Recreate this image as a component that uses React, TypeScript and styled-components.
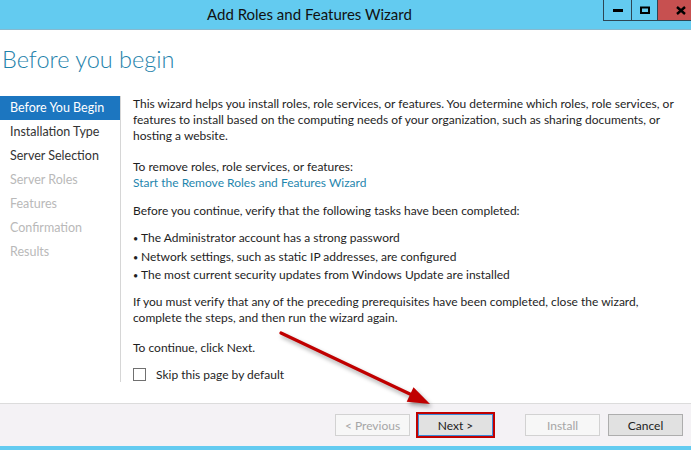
import React from 'react';
import styled, { createGlobalStyle } from 'styled-components';

const GlobalStyle = createGlobalStyle`
  html, body {
    margin: 0;
    padding: 0;
    background: #ffffff;
  }
  body {
    width: 691px;
    height: 450px;
    overflow: hidden;
    font-family: Lato, "Open Sans", sans-serif;
  }
`;

// ウィンドウ全体
const Window = styled.div`
  position: relative;
  width: 691px;
  height: 450px;
  display: flex;
  flex-direction: column;
  background: #ffffff;
`;

const TitleBar = styled.div`
  flex: none;
  height: 29px;
  background: #63cbf0;
  border-bottom: 1px solid #86b9cf;
  display: flex;
  align-items: flex-start;
`;

const TitleText = styled.div`
  flex: 1;
  padding-left: 207px;
  line-height: 29px;
  font-size: 15px;
  color: #111111;
`;

const Controls = styled.div`
  display: flex;
  height: 20px;
  border-left: 1px solid #2d4654;
  border-bottom: 1px solid #2d4654;
`;

const CtrlButton = styled.div<{ $width: number; $close?: boolean }>`
  width: ${({ $width }) => $width}px;
  height: 20px;
  display: flex;
  align-items: center;
  justify-content: center;
  background: ${({ $close }) => ($close ? '#c75050' : 'transparent')};
  & + & {
    border-left: 1px solid #2d4654;
  }
`;

const Header = styled.div`
  flex: none;
  height: 66px;
  box-sizing: border-box;
  padding: 14px 0 0 2px;
`;

const Heading = styled.h1`
  margin: 0;
  font-size: 23.5px;
  font-weight: 300;
  line-height: 30px;
  color: #1e82ab;
`;

const Body = styled.div`
  flex: 1;
  display: flex;
  align-items: flex-start;
`;

const Nav = styled.div`
  flex: none;
  width: 120px;
  height: 286px;
  border-right: 1px solid #d6d6d6;
  display: flex;
  flex-direction: column;
`;

const NavItem = styled.div<{ $state: 'active' | 'done' | 'pending' }>`
  height: 24px;
  line-height: 24px;
  padding-left: 10px;
  font-size: 12.5px;
  white-space: nowrap;
  background: ${({ $state }) => ($state === 'active' ? '#1c76c0' : 'transparent')};
  color: ${({ $state }) =>
    $state === 'active' ? '#ffffff' : $state === 'done' ? '#333333' : '#b9b9b9'};
`;

const Content = styled.div`
  flex: 1;
  padding-left: 12px;
  font-size: 12px;
  line-height: 16px;
  color: #1e1e1e;
`;

const Para = styled.p<{ $gap: number; $lh?: number }>`
  margin: ${({ $gap }) => $gap}px 0 0 0;
  line-height: ${({ $lh }) => $lh ?? 16}px;
  white-space: nowrap;
`;

const Link = styled.span`
  color: #1f86ae;
  cursor: pointer;
`;

const List = styled.ul<{ $gap: number }>`
  margin: ${({ $gap }) => $gap}px 0 0 0;
  padding: 0;
  list-style: none;
`;

const ListItem = styled.li`
  line-height: 17.5px;
  white-space: nowrap;
  &::before {
    content: '•';
    display: inline-block;
    width: 8px;
    font-size: 9px;
  }
`;

const CheckRow = styled.label`
  margin-top: 11px;
  display: flex;
  align-items: center;
  gap: 10px;
  height: 16px;
`;

const CheckBox = styled.span`
  width: 11px;
  height: 11px;
  border: 1px solid #707070;
  background: #ffffff;
`;

const Footer = styled.div`
  flex: none;
  height: 43px;
  box-sizing: border-box;
  border-top: 1px solid #dcdcdc;
  background: #f4f2f5;
  display: flex;
  justify-content: flex-end;
  align-items: flex-start;
  padding: 10px 8px 0 0;
`;

const Button = styled.button<{ $disabled?: boolean; $focused?: boolean; $gapLeft: number }>`
  width: 75px;
  height: 22px;
  margin-left: ${({ $gapLeft }) => $gapLeft}px;
  padding: 0;
  font-family: Lato, "Open Sans", sans-serif;
  font-size: 12px;
  border: 1px solid
    ${({ $disabled, $focused }) => ($disabled ? '#d2d2d2' : $focused ? '#3c8ad8' : '#adadad')};
  background: ${({ $disabled }) => ($disabled ? '#f7f7f7' : '#e1e1e1')};
  color: ${({ $disabled }) => ($disabled ? '#a6a6a6' : '#222222')};
  outline: ${({ $focused }) => ($focused ? '2px solid #c00000' : 'none')};
  outline-offset: 0;
`;

const BottomStrip = styled.div`
  flex: none;
  height: 4px;
  background: #63cbf0;
`;

// 注釈の赤い矢印（画面の上に重ねる）
const ArrowLayer = styled.svg`
  position: absolute;
  left: 0;
  top: 0;
  pointer-events: none;
  filter: drop-shadow(2px 3px 2px rgba(0, 0, 0, 0.35));
`;

const steps: { label: string; state: 'active' | 'done' | 'pending' }[] = [
  { label: 'Before You Begin', state: 'active' },
  { label: 'Installation Type', state: 'done' },
  { label: 'Server Selection', state: 'done' },
  { label: 'Server Roles', state: 'pending' },
  { label: 'Features', state: 'pending' },
  { label: 'Confirmation', state: 'pending' },
  { label: 'Results', state: 'pending' },
];

const App: React.FC = () => {
  return (
    <>
      <GlobalStyle />
      <Window>
        <TitleBar>
          <TitleText>Add Roles and Features Wizard</TitleText>
          <Controls>
            <CtrlButton $width={27}>
              <svg width="10" height="3" viewBox="0 0 10 3">
                <rect x="0" y="0" width="10" height="3" fill="#000" />
              </svg>
            </CtrlButton>
            <CtrlButton $width={25}>
              <svg width="10" height="8" viewBox="0 0 10 8">
                <rect x="1" y="1.5" width="8" height="5.5" fill="none" stroke="#000" strokeWidth="2" />
              </svg>
            </CtrlButton>
            <CtrlButton $width={33} $close>
              <svg width="10" height="9" viewBox="0 0 10 9" style={{ marginLeft: 12 }}>
                <path d="M1 1 L9 8 M9 1 L1 8" stroke="#000" strokeWidth="2.4" />
              </svg>
            </CtrlButton>
          </Controls>
        </TitleBar>

        <Header>
          <Heading>Before you begin</Heading>
        </Header>

        <Body>
          <Nav>
            {steps.map((s) => (
              <NavItem key={s.label} $state={s.state}>
                {s.label}
              </NavItem>
            ))}
          </Nav>
          <Content>
            <Para $gap={0}>
              This wizard helps you install roles, role services, or features. You determine which roles, role services, or
              <br />
              features to install based on the computing needs of your organization, such as sharing documents, or
              <br />
              hosting a website.
            </Para>
            <Para $gap={15}>
              To remove roles, role services, or features:
              <br />
              <Link>Start the Remove Roles and Features Wizard</Link>
            </Para>
            <Para $gap={12}>Before you continue, verify that the following tasks have been completed:</Para>
            <List $gap={10}>
              <ListItem>The Administrator account has a strong password</ListItem>
              <ListItem>Network settings, such as static IP addresses, are configured</ListItem>
              <ListItem>The most current security updates from Windows Update are installed</ListItem>
            </List>
            <Para $gap={9} $lh={16.5}>
              If you must verify that any of the preceding prerequisites have been completed, close the wizard,
              <br />
              complete the steps, and then run the wizard again.
            </Para>
            <Para $gap={13}>To continue, click Next.</Para>
            <CheckRow>
              <CheckBox />
              <span>Skip this page by default</span>
            </CheckRow>
          </Content>
        </Body>

        <Footer>
          <Button $disabled $gapLeft={0}>&lt; Previous</Button>
          <Button $focused $gapLeft={8}>Next &gt;</Button>
          <Button $disabled $gapLeft={32}>Install</Button>
          <Button $gapLeft={8}>Cancel</Button>
        </Footer>
        <BottomStrip />

        <ArrowLayer width="691" height="450" viewBox="0 0 691 450">
          <line x1="281" y1="333" x2="412" y2="395" stroke="#c00000" strokeWidth="3.2" strokeLinecap="round" />
          <polygon points="430,404 406.7,401.7 413.5,387.3" fill="#c00000" />
        </ArrowLayer>
      </Window>
    </>
  );
};

export default App;
